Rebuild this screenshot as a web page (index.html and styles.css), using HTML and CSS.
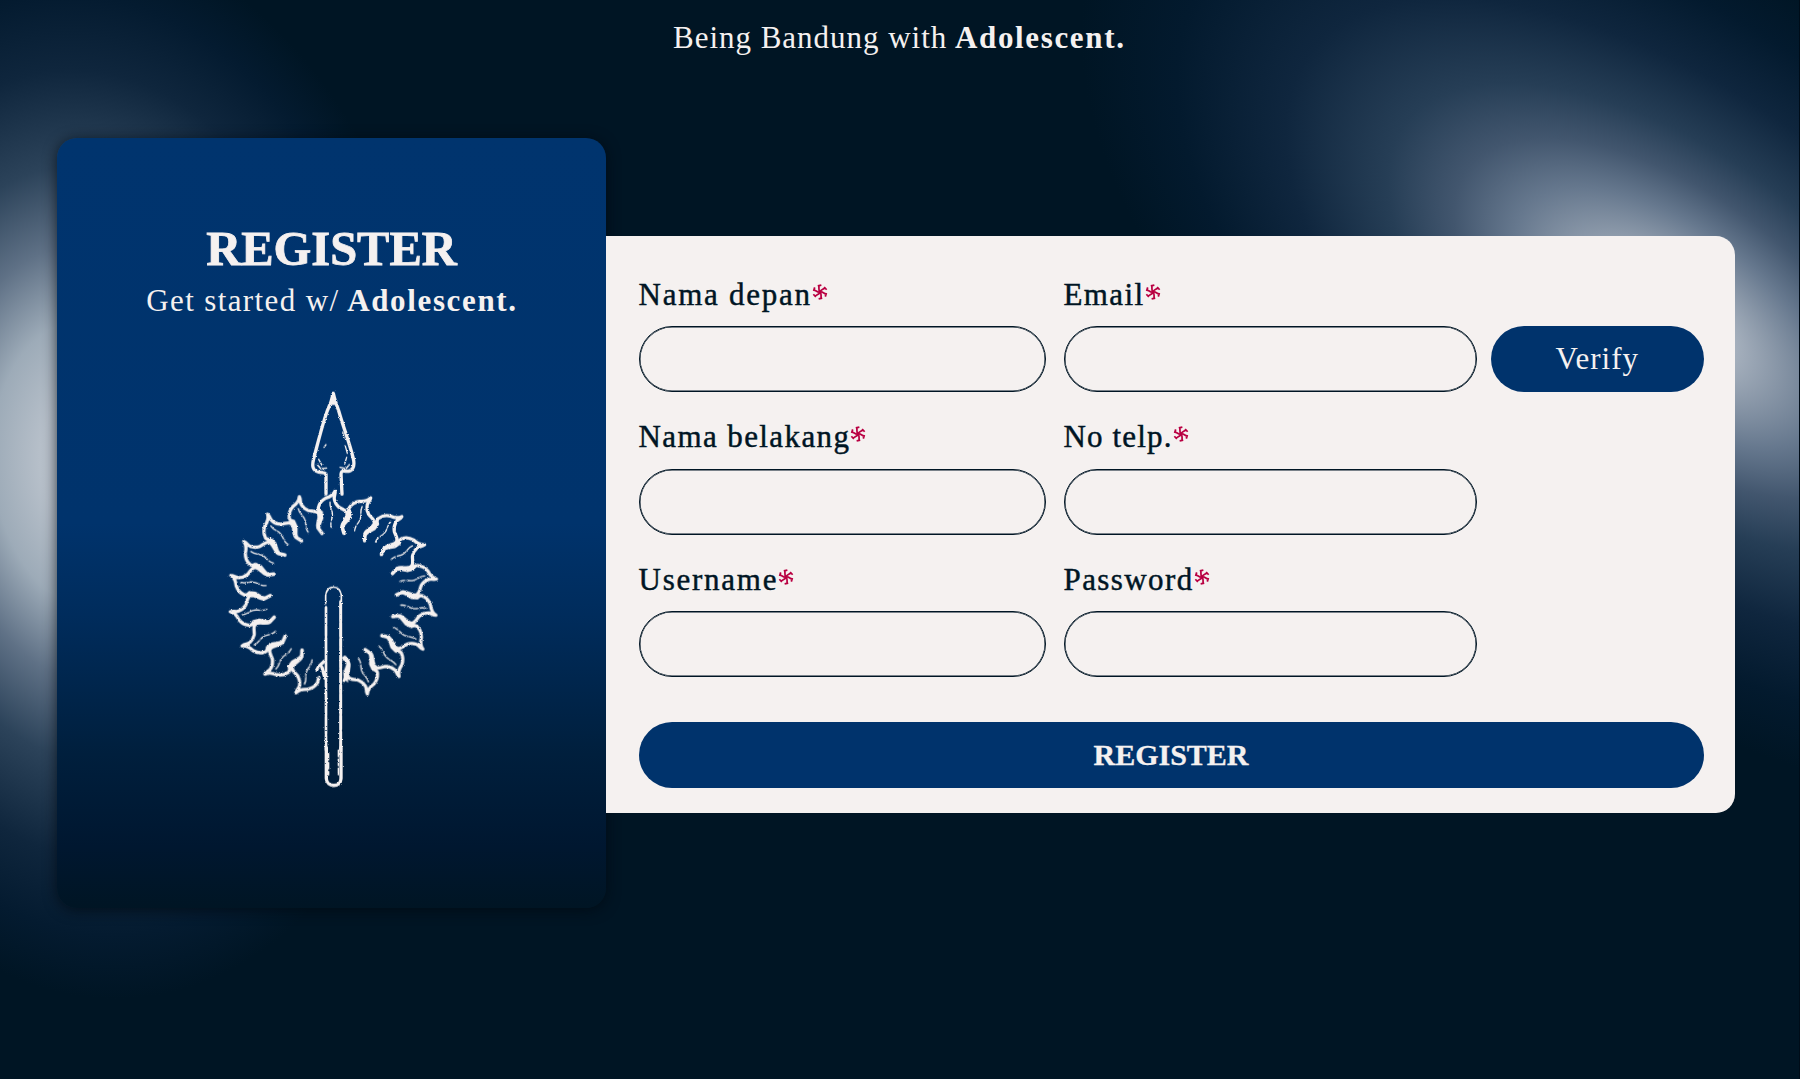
FILE: index.html
```html
<!DOCTYPE html>
<html lang="id">
<head>
<meta charset="utf-8">
<title>Register</title>
<link rel="stylesheet" href="styles.css">
</head>
<body>
<svg class="defs" width="0" height="0" aria-hidden="true">
  <defs>
    <symbol id="pinwheel" viewBox="-10 -10 20 20">
      <g fill="none" stroke="currentColor" stroke-width="2.2">
        <path id="petal" d="M0 0C-2.6-2.6-.6-5-1.6-8.4M-2.8-7.6L1.7-8.6"/>
        <use href="#petal" transform="rotate(60)"/>
        <use href="#petal" transform="rotate(120)"/>
        <use href="#petal" transform="rotate(180)"/>
        <use href="#petal" transform="rotate(240)"/>
        <use href="#petal" transform="rotate(300)"/>
      </g>
    </symbol>
  </defs>
</svg>
<div class="page">
  <div class="glow glow-left"></div>
  <div class="glow glow-right"></div>
  <header class="tagline"><span>Being Bandung with</span> <b>Adolescent.</b></header>
  <main class="register">
    <section class="card">
      <h1>REGISTER</h1>
      <p><span>Get started w/</span> <b>Adolescent.</b></p>
      <svg class="emblem" viewBox="0 0 810 1290" aria-hidden="true">
        <defs>
          <filter id="rough" x="-5%" y="-5%" width="110%" height="110%">
            <feTurbulence type="fractalNoise" baseFrequency=".28" numOctaves="2" seed="4" result="n"/>
            <feDisplacementMap in="SourceGraphic" in2="n" scale="7" xChannelSelector="R" yChannelSelector="G"/>
          </filter>
          <g id="ray">
            <path d="M-49-250C-46-262-54-262-49-270C-46-284-38-290-28-296C-14-300-6-304 0-318C2-306-5-302-2-292C0-282 4-276 12-269C22-262 34-262 39-250" stroke-width="10"/>
            <path d="M39-250C40-234 24-226 23-209L29-190" stroke-width="11"/>
            <path d="M44-266L38-246L22-221L18-212L25-198L33-214L48-232L53-252Z" fill="currentColor" stroke="none"/>
            <path d="M-15-284C-17-268-8-262-7-248C-5-234-15-226-10-207" stroke-width="4" stroke-dasharray="22 5 30 7"/>
          </g>
        </defs>
        <g filter="url(#rough)" fill="none" stroke="currentColor" stroke-linecap="round" stroke-linejoin="round">
          <g transform="translate(400 676) scale(.985)">
            <use href="#ray" transform="rotate(1)"/>
            <use href="#ray" transform="rotate(21)"/>
            <use href="#ray" transform="rotate(41)"/>
            <use href="#ray" transform="rotate(61)"/>
            <use href="#ray" transform="rotate(81)"/>
            <use href="#ray" transform="rotate(101)"/>
            <use href="#ray" transform="rotate(121)"/>
            <use href="#ray" transform="rotate(141)"/>
            <use href="#ray" transform="rotate(161)"/>
            <use href="#ray" transform="rotate(201)"/>
            <use href="#ray" transform="rotate(221)"/>
            <use href="#ray" transform="rotate(241)"/>
            <use href="#ray" transform="rotate(261)"/>
            <use href="#ray" transform="rotate(281)"/>
            <use href="#ray" transform="rotate(301)"/>
            <use href="#ray" transform="rotate(321)"/>
            <use href="#ray" transform="rotate(341)"/>
          </g>
          <path d="M378 372V312C374 306 366 309 356 306C336 302 336 286 341 266C352 226 366 166 382 122C390 106 396 90 400 70C404 90 410 106 416 122C430 172 448 216 460 266C466 292 456 304 440 304C430 304 424 300 423 312L426 372" stroke-width="10"/>
          <path d="M392 104L400 76L408 104Z" fill="currentColor"/>
          <path d="M352 284L362 296L380 294M356 268L366 286M448 284L438 296L420 292M440 262L434 282M428 186L432 204M436 228L442 250M372 232L378 224" stroke-width="4"/>
          <path d="M377 700V680C377 642 424 642 424 680V700" stroke-width="5" stroke-dasharray="26 5"/>
          <path d="M378 712V1140" stroke-width="8" stroke-dasharray="52 4 30 5 70 3"/>
          <path d="M422 694V1140" stroke-width="9" stroke-dasharray="60 4 42 6 24 3"/>
          <path d="M379 1132V1226C380 1252 422 1254 423 1226V1132" stroke-width="10"/>
          <path d="M386 1150V1215M415 1140V1215" stroke-width="4" stroke-dasharray="20 7"/>
          <path d="M350 900C354 886 366 882 372 874M366 892L375 925" stroke-width="10"/>
          <path d="M428 866L444 872L446 900L432 932" stroke-width="8"/>
        </g>
      </svg>
    </section>
    <form class="panel">
      <div class="fields">
        <div class="field">
          <label for="first" class="wide">Nama depan<svg class="req"><use href="#pinwheel"/></svg></label>
          <input id="first" type="text">
        </div>
        <div class="field">
          <label for="email">Email<svg class="req"><use href="#pinwheel"/></svg></label>
          <input id="email" type="text">
        </div>
        <button class="btn verify" type="button">Verify</button>
        <div class="field">
          <label for="last">Nama belakang<svg class="req"><use href="#pinwheel"/></svg></label>
          <input id="last" type="text">
        </div>
        <div class="field">
          <label for="phone" class="snug">No telp.<svg class="req"><use href="#pinwheel"/></svg></label>
          <input id="phone" type="text">
        </div>
        <div class="field first-col">
          <label for="user" class="wide">Username<svg class="req"><use href="#pinwheel"/></svg></label>
          <input id="user" type="text">
        </div>
        <div class="field">
          <label for="pass">Password<svg class="req"><use href="#pinwheel"/></svg></label>
          <input id="pass" type="password">
        </div>
      </div>
      <button class="btn submit" type="button">REGISTER</button>
    </form>
  </main>
</div>
</body>
</html>
```
FILE: styles.css
```css
* { box-sizing: border-box; }

body {
  margin: 0;
  background: #001524;
  color: #f5f1f0;
  font: 31px/34px "Liberation Serif", "Times New Roman", serif;
}

.defs { position: absolute; }

.page {
  position: relative;
  height: 1079px;
  overflow: hidden;
  border-right: 1.5px solid #000c18;
}

/* soft lights behind the card and the form */
.glow { position: absolute; }

.glow-left {
  left: -270px;
  top: -70px;
  width: 720px;
  height: 1070px;
  transform: rotate(-5deg);
  background: radial-gradient(closest-side, #c2c9d2 0, #b6bfc9 14%, #9dabb8 27%, #5f7186 41%, #2c435a 56%, #0f263d 74%, #041b30 88%, #001524 100%);
}

.glow-right {
  left: 971px;
  top: -32px;
  width: 1400px;
  height: 700px;
  transform: rotate(36deg);
  background: radial-gradient(closest-side, #bcc4cf 0, #b4bdc8 7%, #8f9cac 16%, #66788e 26%, #42566e 36%, #263e56 47%, #0f263e 64%, #031a2e 82%, #001524 98%);
}

.tagline {
  position: relative;
  padding: 21px 0 0 673px;
  height: 138px;
  white-space: nowrap;
}

.tagline span { letter-spacing: .98px; }
.tagline b, .card b { letter-spacing: 1.65px; }

.register {
  position: relative;
  display: flex;
  align-items: flex-start;
  padding-left: 57px;
}

.card {
  width: 549px;
  height: 770px;
  padding-top: 82px;
  border-radius: 20px;
  text-align: center;
  background: linear-gradient(#00346e 0, #00336c 50%, #002c5c 62%, #001f3d 80%, #001730 92%, #001524 100%);
  box-shadow: 0 2px 14px rgba(0, 10, 18, .75);
}

.card h1 {
  margin: 0;
  font-size: 48.5px;
  line-height: 58px;
  -webkit-text-stroke: .8px;
}

.card p { margin: 6px 0 0 1px; }
.card p span { letter-spacing: 1.37px; }

.emblem {
  display: block;
  width: 270px;
  height: 430px;
  margin: 52px 0 0 142.5px;
}

.panel {
  position: relative;
  width: 1129px;
  height: 577px;
  margin-top: 98px;
  padding: 42px 31.5px 0 32.5px;
  border-radius: 0 19px 19px 0;
  background: #f5f1f0;
  color: #001524;
}

.fields {
  display: grid;
  grid-template-columns: 407px 413.5px 208.5px;
  column-gap: 18px;
  row-gap: 26px;
}

.first-col { grid-column: 1; }
.field { display: flex; flex-direction: column; }

label {
  height: 34px;
  margin-bottom: 14.4px;
  letter-spacing: 1.4px;
  white-space: nowrap;
  -webkit-text-stroke: .45px;
}

label.snug { letter-spacing: 1.15px; }
label.wide { letter-spacing: 1.75px; }

.req {
  width: 16px;
  height: 16px;
  vertical-align: 5px;
  color: #b90042;
}

input {
  width: 100%;
  height: 66px;
  margin-bottom: 2px;
  padding: 0 28px;
  border: 1px solid #001524;
  border-radius: 33px;
  box-shadow: inset 0 0 0 .5px #001524;
  background: transparent;
  color: inherit;
  font: inherit;
  outline: 0;
}

.btn {
  height: 66px;
  padding: 0;
  border: 0;
  border-radius: 33px;
  background: #00336c;
  color: #f5f1f0;
  font: inherit;
}

.verify {
  align-self: end;
  margin: 0 0 2px -4px;
  letter-spacing: 1px;
}

.submit {
  width: 1065px;
  margin-top: 42.5px;
  font-size: 30px;
  font-weight: bold;
  -webkit-text-stroke: .3px;
}
```
